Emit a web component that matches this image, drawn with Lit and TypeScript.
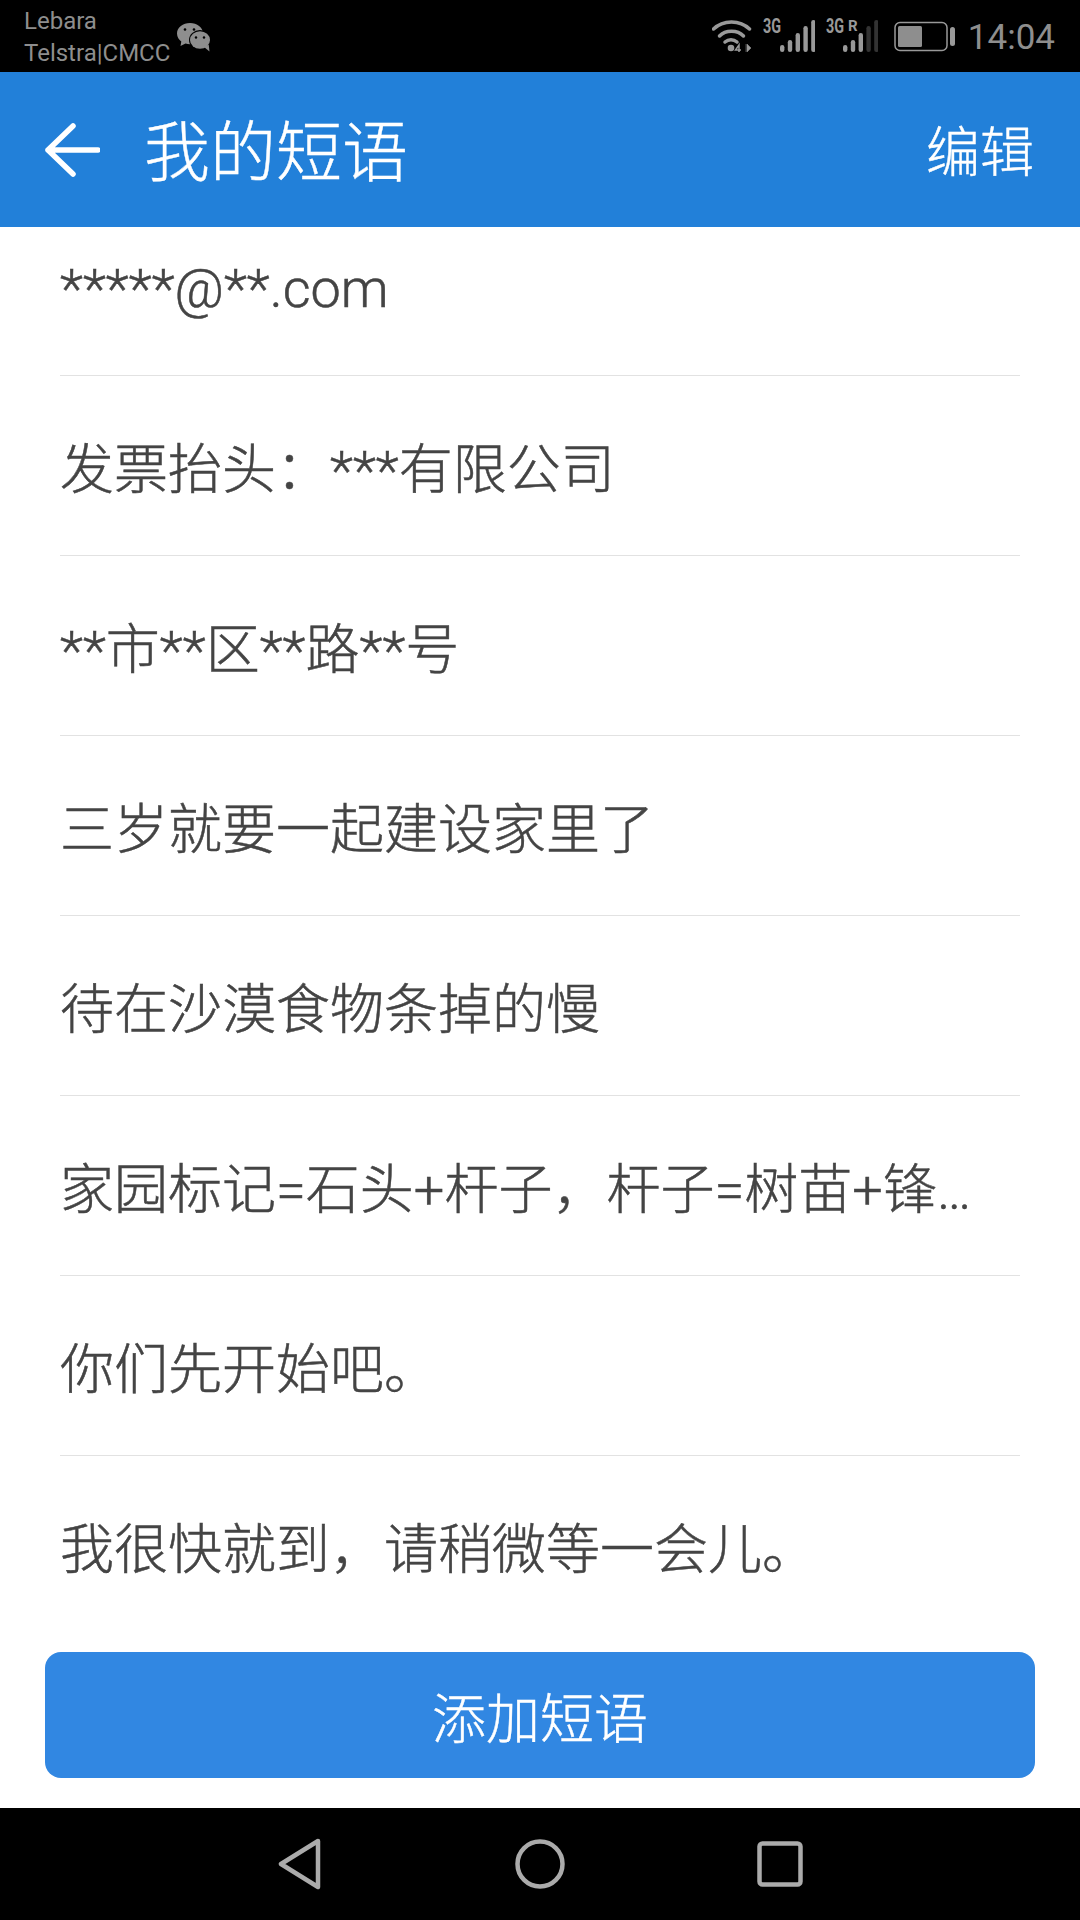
import { LitElement, html, css, svg } from "lit";
import { customElement } from "lit/decorators.js";

const ROWS = [
  "*****@**.com",
  "发票抬头：***有限公司",
  "**市**区**路**号",
  "三岁就要一起建设家里了",
  "待在沙漠食物条掉的慢",
  "家园标记=石头+杆子，杆子=树苗+锋…",
  "你们先开始吧。",
  "我很快就到，请稍微等一会儿。",
];

const BARS = [7, 12, 19, 26, 32];

const network = (label: string, roaming: boolean, lit: number) => svg`
  <text x="0" y="15" transform="scale(.72 1)" class="net">${label}</text>
  ${roaming ? svg`<text x="22" y="13" class="roam">R</text>` : ""}
  ${BARS.map(
    (h, i) =>
      svg`<rect x=${17 + i * 7.8} y=${34 - h} width="4.400" height=${h} rx="2.200" fill=${i < lit ? "#999" : "#333"}></rect>`
  )}
`;

@customElement("app-root")
export class AppRoot extends LitElement {
  static styles = css`
    :host {
      display: flex;
      flex-direction: column;
      width: 1080px;
      height: 1920px;
      background: #fff;
      font-family: Roboto, "Noto Sans CJK SC", sans-serif;
      overflow: hidden;
    }

    .status {
      flex: 0 0 72px;
      background: #000;
      display: flex;
      align-items: center;
      color: #8e8e8e;
      padding: 0 25px 0 24px;
    }
    .carrier {
      font-size: 24px;
      line-height: 32px;
      margin-top: 2px;
    }
    .wechat {
      align-self: flex-start;
      margin: 23px 0 0 7px;
    }
    .status-right {
      margin-left: auto;
      display: flex;
      align-items: center;
      gap: 11px;
    }
    .status-right svg {
      display: block;
    }
    .net {
      font-size: 20px;
      font-weight: 700;
      fill: #999;
    }
    .roam {
      font-size: 15px;
      font-weight: 700;
      fill: #999;
    }
    .clock {
      font-size: 35px;
      margin: 2px 0 0 1px;
    }

    .bar {
      flex: 0 0 155px;
      background: #2280d9;
      color: #fff;
      display: flex;
      align-items: center;
      padding: 0 46px 0 44px;
    }
    .back {
      display: block;
      margin-right: 44px;
    }
    .title {
      font-size: 66px;
      line-height: 1;
      margin-top: 8px;
      font-weight: 300;
      -webkit-text-stroke: 0.4px #fff;
    }
    .edit {
      margin-left: auto;
      font-size: 54px;
      line-height: 1;
      margin-top: 8px;
      font-weight: 300;
      -webkit-text-stroke: 0.4px #fff;
    }

    .list {
      flex: 1;
      min-height: 0;
      overflow: hidden;
      padding: 0 60px;
      display: flex;
      flex-direction: column;
    }
    .row {
      flex: 0 0 180px;
      box-sizing: border-box;
      display: flex;
      align-items: center;
      border-bottom: 1px solid #e2e2e2;
      font-size: 54px;
      font-weight: 300;
      color: #444;
      -webkit-text-stroke: 0.5px #444;
      white-space: nowrap;
    }
    .row:first-child {
      flex-basis: 149px;
      padding-bottom: 26px;
    }

    .foot {
      flex: 0 0 173px;
      box-sizing: border-box;
      padding: 17px 45px 30px;
    }
    .add {
      height: 126px;
      border-radius: 16px;
      background: #3187e2;
      color: #fff;
      font-size: 54px;
      font-weight: 300;
      -webkit-text-stroke: 0.4px #fff;
      display: flex;
      align-items: center;
      justify-content: center;
    }

    .nav {
      flex: 0 0 112px;
      background: #000;
      display: grid;
      grid-template-columns: repeat(3, 240px);
      justify-content: center;
      justify-items: center;
      align-items: center;
    }
    .nav svg {
      display: block;
    }
  `;

  render() {
    return html`
      <div class="status">
        <div class="carrier">Lebara<br />Telstra|CMCC</div>
        <svg class="wechat" width="34" height="29" viewBox="0 0 34 29">
          <path d="M13 0C6 0 0 4.500 0 10.500c0 3.500 2 6.300 4.300 8L3.500 23l5-2.500c1.500.5 3 .7 4.500.7 7 0 13-4.700 13-10.700S20 0 13 0z" fill="#8e8e8e"></path>
          <ellipse cx="23" cy="17" rx="11" ry="10" fill="#000"></ellipse>
          <ellipse cx="23" cy="17" rx="10" ry="8.800" fill="#8e8e8e"></ellipse>
          <path d="M27 24l5.500 4.500-.8-7z" fill="#8e8e8e"></path>
          <circle cx="8" cy="6.500" r="1.300" fill="#000"></circle>
          <circle cx="17" cy="6.500" r="1.300" fill="#000"></circle>
          <circle cx="19" cy="14.500" r="1.200" fill="#000"></circle>
          <circle cx="27" cy="14.500" r="1.200" fill="#000"></circle>
        </svg>
        <div class="status-right">
          <svg width="40" height="36" viewBox="0 0 40 36">
            <path d="M1.500 11C11 1.500 28 1.500 37.500 11" fill="none" stroke="#999" stroke-width="3.500" stroke-linecap="round"></path>
            <path d="M7.500 18C13.500 11.500 25.500 11.500 31.500 18" fill="none" stroke="#999" stroke-width="3.500" stroke-linecap="round"></path>
            <path d="M13 24c3.500-3 8.500-3 12 0" fill="none" stroke="#999" stroke-width="3.500" stroke-linecap="round"></path>
            <circle cx="19" cy="30" r="3.300" fill="#999"></circle>
            <path d="M27 34v-7l-3.500 5h5.500" fill="none" stroke="#999" stroke-width="1.500"></path>
            <path d="M34 26v8M35 26l4 4-4 4z" fill="#999" stroke="#999" stroke-width=".5"></path>
          </svg>
          <svg width="52" height="44" viewBox="0 -4 52 44">${network("3G", false, 5)}</svg>
          <svg width="52" height="44" viewBox="0 -4 52 44">${network("3G", true, 3)}</svg>
          <svg width="62" height="36" viewBox="0 0 62 36" style="margin-left:5px">
            <rect x="1" y="4.500" width="52" height="28" rx="5" fill="none" stroke="#999" stroke-width="1.500"></rect>
            <rect x="4" y="8" width="24" height="21" rx="1.500" fill="#8e8e8e"></rect>
            <rect x="56" y="9" width="5" height="19" rx="2.500" fill="#999"></rect>
          </svg>
          <div class="clock">14:04</div>
        </div>
      </div>

      <div class="bar">
        <svg class="back" width="56" height="56" viewBox="0 0 56 56">
          <path d="M54 28H4M29 4L4 28l25 24" fill="none" stroke="#fff" stroke-width="5.500" stroke-linecap="round" stroke-linejoin="round"></path>
        </svg>
        <div class="title">我的短语</div>
        <div class="edit">编辑</div>
      </div>

      <div class="list">
        ${ROWS.map((r) => html`<div class="row">${r}</div>`)}
      </div>

      <div class="foot"><div class="add">添加短语</div></div>

      <div class="nav">
        <svg width="44" height="52" viewBox="0 0 44 52">
          <path d="M40 3L3 26l37 23z" fill="none" stroke="#ababab" stroke-width="4.500" stroke-linejoin="round"></path>
        </svg>
        <svg width="50" height="50" viewBox="0 0 50 50">
          <circle cx="25" cy="25" r="22.500" fill="none" stroke="#ababab" stroke-width="4.500"></circle>
        </svg>
        <svg width="46" height="46" viewBox="0 0 46 46">
          <rect x="2.500" y="2.500" width="41" height="41" rx="3" fill="none" stroke="#ababab" stroke-width="4.500"></rect>
        </svg>
      </div>
    `;
  }
}
